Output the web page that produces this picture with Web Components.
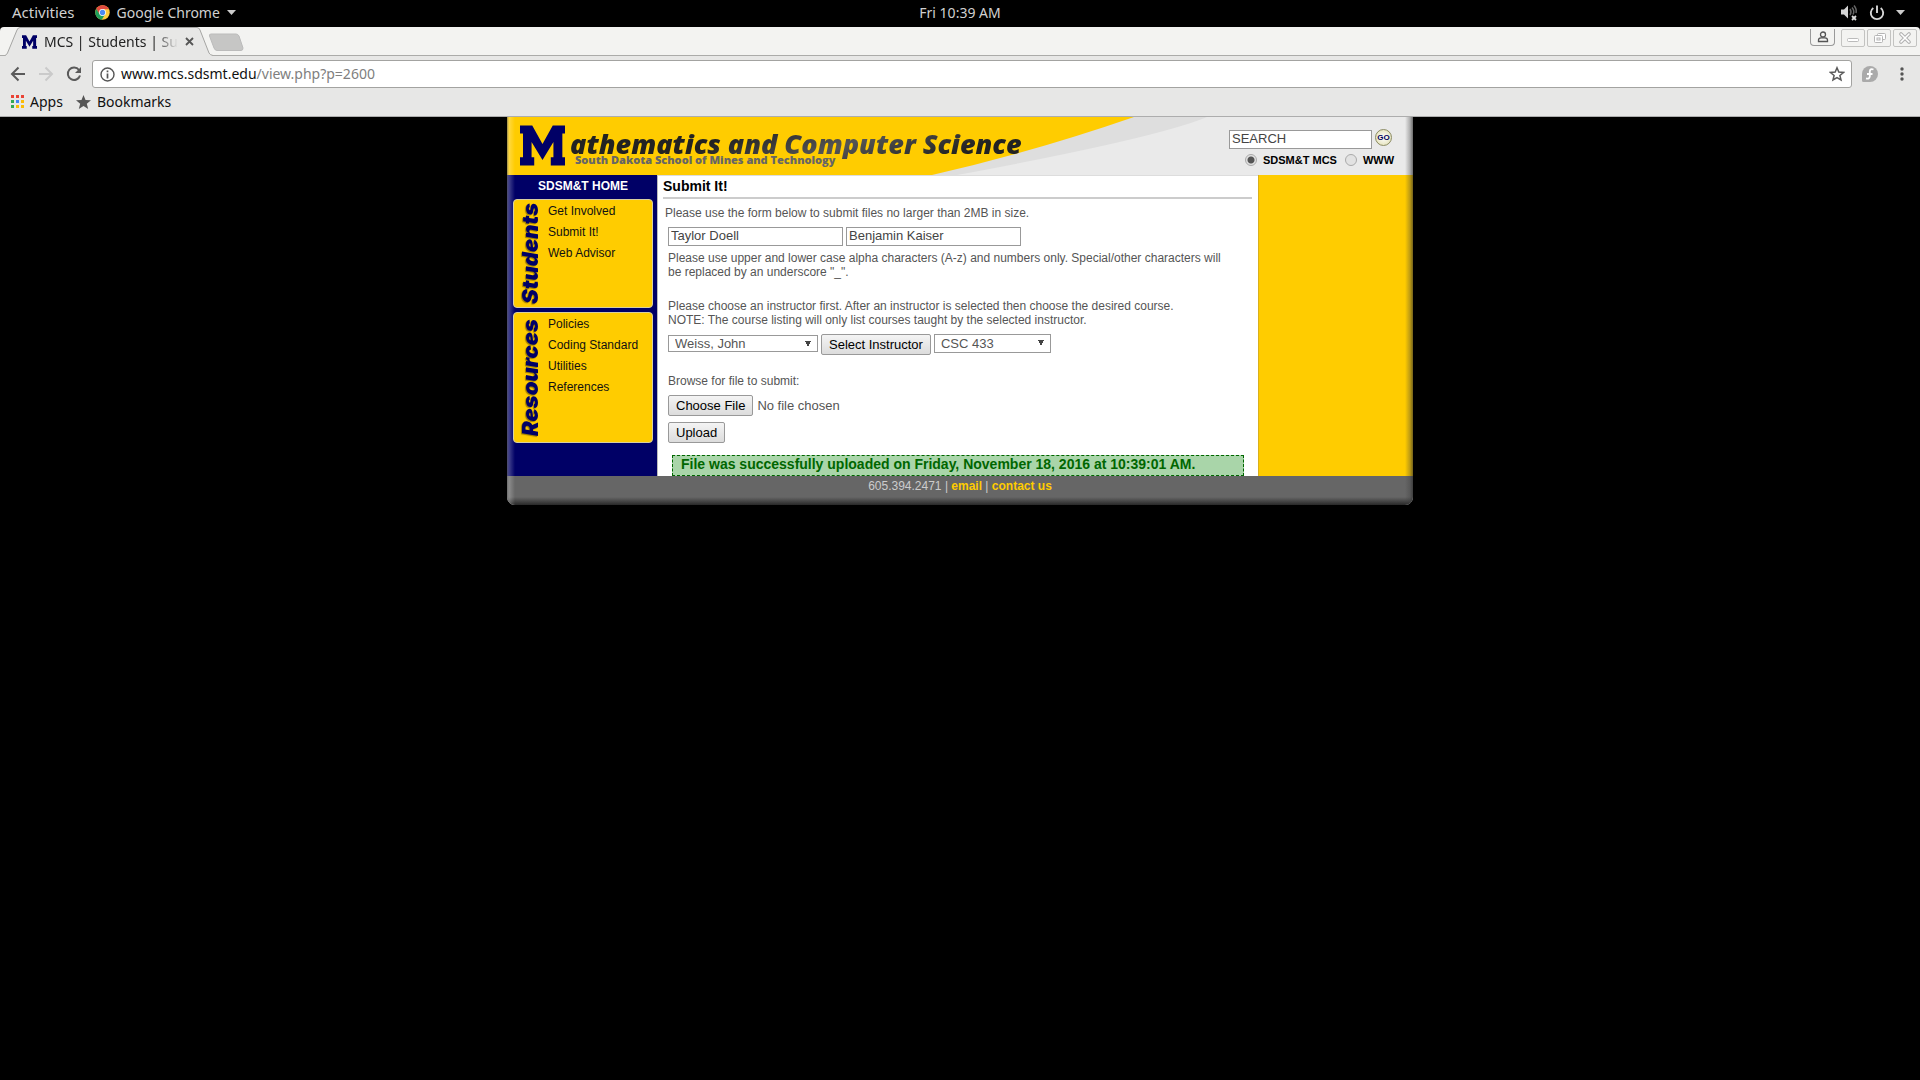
<!DOCTYPE html>
<html lang="en">
<head>
<meta charset="utf-8">
<title>MCS | Students | Submit It!</title>
<style>
  body { margin: 0; min-height: 100vh; background: #000; font-family: "Liberation Sans", sans-serif; }
</style>
</head>
<body>
<desktop-bar></desktop-bar>
<browser-tabs></browser-tabs>
<browser-toolbar></browser-toolbar>
<bookmarks-bar></bookmarks-bar>
<site-page>
  <site-header slot="header"></site-header>
  <side-column slot="nav">
    <side-menu label="Students" size="short">
      <a href="#involved">Get Involved</a>
      <a href="#submit">Submit It!</a>
      <a href="#advisor">Web Advisor</a>
    </side-menu>
    <side-menu label="Resources" size="tall">
      <a href="#policies">Policies</a>
      <a href="#coding">Coding Standard</a>
      <a href="#utilities">Utilities</a>
      <a href="#references">References</a>
    </side-menu>
  </side-column>
  <submit-form></submit-form>
  <site-footer slot="footer"></site-footer>
</site-page>

<script>
const define = (name, html) => customElements.define(name, class extends HTMLElement {
  constructor() {
    super();
    const t = document.createElement('template');
    t.innerHTML = typeof html === 'function' ? html(this) : html;
    this.attachShadow({ mode: 'open' }).append(t.content.cloneNode(true));
  }
});

define('desktop-bar', `
<style>
  :host { display: grid; grid-template-columns: 1fr auto 1fr; align-items: center; height: 27px; padding: 0 12px; background: #000; color: #d0d0d0; font: 14px/25px "Noto Sans", sans-serif; }
  button { font: inherit; color: inherit; background: none; border: 0; padding: 0; display: flex; align-items: center; }
  div { display: flex; align-items: center; height: 25px; align-self: start; }
  .left { gap: 20px; }
  .left > button:first-child { font-size: 15px; }
  .app { gap: 7px; }
  .right { justify-content: flex-end; gap: 11px; padding-right: 3px; }
  svg { display: block; }
</style>
<div class="left">
  <button>Activities</button>
  <button class="app">
    <svg width="15" height="15" viewBox="0 0 30 30"><circle cx="15" cy="15" r="14.500" fill="#ffcd40"/><path d="M2.500 8A14.500 14.500 0 0 1 28 8.500H15L9 18Z" fill="#e04a3f"/><path d="M2.500 7.700A14.500 14.500 0 0 0 13.500 29.400L20 19 9 18Z" fill="#1e9f5b"/><circle cx="15" cy="15" r="6.800" fill="#fff"/><circle cx="15" cy="15" r="5.300" fill="#4c8bf5"/></svg>
    <span>Google Chrome</span>
    <svg width="9" height="5" viewBox="0 0 9 5"><path d="M0 0H9L4.500 5Z" fill="#ccc"/></svg>
  </button>
</div>
<div>Fri 10:39 AM</div>
<div class="right">
  <svg width="18" height="17" viewBox="0 0 18 17"><path d="M1 5.500H4L8 1.500V14.500L4 10.500H1Z" fill="#d5d5d5"/><path d="M10 5Q12 8 10 11M12 3.500Q15 7 13 10.500M14 1.500Q17 5 16 9" fill="none" stroke="#666" stroke-width="1.500"/><path d="M12 12 16 16M16 12 12 16" stroke="#ddd" stroke-width="1.800"/></svg>
  <svg width="16" height="16" viewBox="0 0 16 16" fill="none" stroke="#d5d5d5" stroke-width="1.900"><path d="M4.300 3A6.200 6.200 0 1 0 11.700 3M8 .5V8"/></svg>
  <svg width="9" height="5" viewBox="0 0 9 5"><path d="M0 0H9L4.500 5Z" fill="#ccc"/></svg>
</div>`);

define('browser-tabs', `
<style>
  :host { display: flex; align-items: flex-start; height: 29px; background: linear-gradient(#ababa9, #ababa9) bottom / 100% 1px no-repeat #f3f3f1; border-radius: 4px 4px 0 0; color: #222; font: 14px "Noto Sans", sans-serif; padding: 0 3px 0 5px; box-sizing: border-box; }
  .tab { position: relative; width: 208px; height: 29px; display: flex; align-items: center; gap: 7px; padding: 0 18px 0 17px; box-sizing: border-box; }
  .tab > svg.shape { position: absolute; inset: 0; }
  .tab > * { position: relative; }
  .title { width: 134px; overflow: hidden; white-space: nowrap; line-height: 29px; -webkit-mask: linear-gradient(90deg, #000 110px, transparent 134px); mask: linear-gradient(90deg, #000 110px, transparent 134px); }
  button { border: 0; background: none; padding: 0; display: flex; color: inherit; }
  .new { padding-top: 6px; margin-left: -5px; }
  .spacer { flex: 1; }
  .win { display: flex; gap: 2px; }
  .win button { width: 24px; height: 18px; box-sizing: border-box; border: 1px solid #c3c3c1; border-radius: 2px; justify-content: center; align-items: center; margin-top: 2px; }
  .win button:first-child { border-color: #999; border-top: 0; border-radius: 0 0 4px 4px; width: 25px; height: 17px; margin-right: 4px; }
  svg { display: block; flex: none; }
</style>
<div class="tab">
  <svg class="shape" width="208" height="29" viewBox="0 0 208 29"><path d="M0 29V28.500Q1.500 28 2.500 26L12 3Q13 .5 15 .5H192Q194 .5 195 3L204 26Q205 28 208 28.500V29Z" fill="#e7e7e6"/><path d="M0 28.500Q1.500 28 2.500 26L12 3Q13 .5 15 .5H192Q194 .5 195 3L204 26Q205 28 208 28.500" fill="none" stroke="#a5a5a3"/></svg>
  <svg width="15" height="14" viewBox="0 0 136 121"><path d="M0 0H37L68 56 99 0H136V24H128V96H136V121H93V96H101V50L68 104 35 50V96H43V121H0V96H9V24H0Z" fill="#000066"/></svg>
  <span class="title">MCS | Students | Submit It!</span>
  <button aria-label="Close tab"><svg width="9" height="9" viewBox="0 0 9 9"><path d="M1 1 8 8M8 1 1 8" stroke="#555" stroke-width="1.800"/></svg></button>
</div>
<button class="new" aria-label="New tab"><svg width="36" height="19" viewBox="0 0 36 19"><path d="M3 1H28Q30 1 31 3L35 15Q35 17.500 33 17.500H9Q7 17.500 6 15L1.500 3Q1 1 3 1Z" fill="#c6c6c5" stroke="#bbb"/></svg></button>
<span class="spacer"></span>
<div class="win">
  <button aria-label="User"><svg width="12" height="12" viewBox="0 0 12 12" fill="none" stroke="#555" stroke-width="1.300"><circle cx="6" cy="3.500" r="2.500"/><path d="M1.500 10.500V9Q1.500 7 4 6.800H8Q10.500 7 10.500 9V10.500Z"/></svg></button>
  <button aria-label="Minimize"><svg width="12" height="12" viewBox="0 0 12 12"><rect x=".5" y="6.500" width="11" height="3" rx="1" fill="#fff" stroke="#bbb"/></svg></button>
  <button aria-label="Restore"><svg width="13" height="12" viewBox="0 0 13 12" fill="#fff" stroke="#b5b5b5"><rect x="4.500" y="1.500" width="8" height="6" rx="1"/><rect x="1.500" y="3.500" width="8" height="7" rx="1"/><rect x="4" y="6" width="3" height="2"/></svg></button>
  <button aria-label="Close"><svg width="12" height="12" viewBox="0 0 12 12"><path d="M2 2 10 10M10 2 2 10" stroke="#b0b0b0" stroke-width="3.600" stroke-linecap="round"/><path d="M2 2 10 10M10 2 2 10" stroke="#fff" stroke-width="1.600" stroke-linecap="round"/></svg></button>
</div>`);

define('browser-toolbar', `
<style>
  :host { display: flex; align-items: center; height: 36px; padding: 0 13px 0 10px; background: #e7e7e6; font: 14px "Noto Sans", sans-serif; }
  button { border: 0; background: none; padding: 0; display: flex; }
  svg { display: block; }
  .nav { display: flex; gap: 12px; margin-right: 10px; }
  .box { flex: 1; display: flex; align-items: center; gap: 6px; height: 28px; box-sizing: border-box; border: 1px solid #a3a3a1; border-radius: 3px; background: #fff; padding: 0 6px 0 7px; }
  .url { flex: 1; color: #808080; line-height: 26px; }
  .url b { font-weight: 400; color: #111; }
  .ext { display: flex; align-items: center; gap: 22px; margin-left: 10px; padding-right: 3px; }
</style>
<div class="nav">
  <button aria-label="Back"><svg width="16" height="16" viewBox="0 0 16 16" fill="none" stroke="#5a5a5a" stroke-width="2"><path d="M15 8H2.500M8.500 1.500 2 8 8.500 14.500"/></svg></button>
  <button aria-label="Forward"><svg width="16" height="16" viewBox="0 0 16 16" fill="none" stroke="#cacaca" stroke-width="2"><path d="M1 8H13.500M7.500 1.500 14 8 7.500 14.500"/></svg></button>
  <button aria-label="Reload"><svg width="16" height="16" viewBox="0 0 16 16"><path d="M13 4A6.200 6.200 0 1 0 14 9.500" fill="none" stroke="#5a5a5a" stroke-width="2"/><path d="M15 1V7H9Z" fill="#5a5a5a"/></svg></button>
</div>
<div class="box">
  <svg width="15" height="15" viewBox="0 0 15 15" fill="none" stroke="#555"><circle cx="7.500" cy="7.500" r="6.500" stroke-width="1.400"/><path d="M7.500 6.500V11.500M7.500 3.500V5.200" stroke-width="1.700"/></svg>
  <span class="url"><b>www.mcs.sdsmt.edu</b>/view.php?p=2600</span>
  <button aria-label="Bookmark this page"><svg width="16" height="16" viewBox="0 0 16 16"><path d="M8 1.800 9.800 6.100 14.500 6.500 10.900 9.500 12 14 8 11.600 4 14 5.100 9.500 1.500 6.500 6.200 6.100Z" fill="none" stroke="#5a5a5a" stroke-width="1.500"/></svg></button>
</div>
<div class="ext">
  <button aria-label="Fedora"><svg width="16" height="16" viewBox="0 0 16 16"><path d="M8 0A8 8 0 1 1 8 16H1.500Q0 16 0 14.500V8A8 8 0 0 1 8 0Z" fill="#aaa"/><path d="M11.500 3.500Q8 2.200 7.800 5.500V10.500Q7.500 13.300 4 12.300M5 8H10.500" fill="none" stroke="#fff" stroke-width="1.800"/></svg></button>
  <button aria-label="Menu"><svg width="4" height="14" viewBox="0 0 4 14" fill="#555"><circle cx="2" cy="2" r="1.700"/><circle cx="2" cy="7" r="1.700"/><circle cx="2" cy="12" r="1.700"/></svg></button>
</div>`);

define('bookmarks-bar', `
<style>
  :host { display: flex; align-items: flex-start; gap: 13px; height: 25px; box-sizing: border-box; padding: 0 11px; background: #e7e7e6; border-bottom: 1px solid #adadad; font: 14px "Noto Sans", sans-serif; }
  a { display: flex; align-items: center; gap: 6px; color: #111; text-decoration: none; line-height: 19px; }
  svg { display: block; }
</style>
<a href="#apps"><svg width="13" height="13" viewBox="0 0 13 13"><path d="M0 0H3V3H0ZM5 0H8V3H5ZM10 0H13V3H10Z" fill="#ea4335"/><path d="M0 5H3V8H0ZM0 10H3V13H0Z" fill="#34a853"/><path d="M5 5H8V8H5Z" fill="#4285f4"/><path d="M10 5H13V8H10ZM5 10H8V13H5ZM10 10H13V13H10Z" fill="#fbbc05"/></svg>Apps</a>
<a href="#bookmarks"><svg width="15" height="14" viewBox="0 0 15 14"><path d="M7.500 0 9.500 5 15 5.300 10.800 8.700 12.200 14 7.500 11 2.800 14 4.200 8.700 0 5.300 5.500 5Z" fill="#555"/></svg>Bookmarks</a>`);

define('site-page', `
<style>
  :host { display: block; position: relative; width: min(906px, 100%); margin: 0 auto; background: #fff; border-radius: 0 0 8px 8px; overflow: hidden; }
  .cols { display: grid; grid-template-columns: 150px 1fr 155px; }
  .main { border-left: 1px solid #bbb; border-top: 1px solid #ddd; padding: 0 6px 0 5px; }
  .right { background: #fc0; border-left: 1px solid #d9b01c; }
  .edge { position: absolute; inset: 0; pointer-events: none; background:
    linear-gradient(90deg, rgba(110,110,110,.7), rgba(255,255,255,.25) 2px, rgba(255,255,255,0) 8px) left / 8px 100% no-repeat,
    linear-gradient(270deg, rgba(40,40,40,.65), rgba(60,60,60,.35) 3px, rgba(60,60,60,0) 8px) right / 8px 100% no-repeat,
    linear-gradient(0deg, rgba(20,20,20,.75), rgba(60,60,60,0) 8px) bottom / 100% 8px no-repeat; }
</style>
<slot name="header"></slot>
<div class="cols">
  <slot name="nav"></slot>
  <div class="main"><slot></slot></div>
  <div class="right"></div>
</div>
<slot name="footer"></slot>
<div class="edge"></div>`);

define('site-header', `
<style>
  :host { display: flex; justify-content: space-between; position: relative; height: 58px; background: #eaeaea; }
  .swoosh { position: absolute; left: 0; top: 0; }
  .brand { position: relative; display: flex; padding: 8px 0 0 13px; gap: 5px; }
  .words { display: flex; flex-direction: column; align-items: flex-start; white-space: nowrap; }
  h1 { margin: 0; padding: 4px 4px 0 0; font: italic 800 27px/30px "Open Sans", sans-serif; color: transparent; background: linear-gradient(160deg, #222 35%, #555 60%, #222 85%); -webkit-background-clip: text; background-clip: text; }
  p { margin: -6px 0 0 5px; font: 800 11px/13px "Open Sans", sans-serif; color: #666; }
  form { position: relative; width: 180px; padding: 12px 0 0; margin: 0 4px 0 0; }
  .row { display: flex; gap: 3px; align-items: flex-start; }
  .row input { width: 143px; height: 19px; box-sizing: border-box; border: 1px solid #999; padding: 0 2px 2px; font: 13px "Liberation Sans", sans-serif; color: #444; margin-top: 1px; background: #fff; }
  button { width: 17px; height: 17px; padding: 0; border: 1px solid #8b8b62; border-radius: 50%; background: radial-gradient(#fff, #e8e6c4 70%, #bdb98c); font: 700 8px/15px "Liberation Sans", sans-serif; color: #00005c; }
  .opts { display: flex; align-items: center; padding-left: 16px; margin-top: 2px; color: #000; font: 700 11px/18px "Liberation Sans", sans-serif; }
  .opts input { appearance: none; width: 12px; height: 12px; margin: 0; border: 1px solid #aaa; border-radius: 50%; background: #e2e2e2; }
  .opts input:checked { background: radial-gradient(circle, #555 0 3px, #e2e2e2 4px); }
  .opts label { margin: 0 8px 0 6px; }
</style>
<svg class="swoosh" width="906" height="58" viewBox="0 0 906 58"><path d="M620 0H700Q650 21 450 58H410Z" fill="#dedede"/><path d="M0 0H627Q526 35 425 58H0Z" fill="#fc0"/></svg>
<div class="brand">
  <svg width="45" height="41" viewBox="0 0 136 121"><path d="M0 0H37L68 56 99 0H136V24H128V96H136V121H93V96H101V50L68 104 35 50V96H43V121H0V96H9V24H0Z" fill="#000066"/></svg>
  <div class="words"><h1>athematics and Computer Science</h1><p>South Dakota School of Mines and Technology</p></div>
</div>
<form>
  <div class="row"><input type="text" value="SEARCH" aria-label="Search"><button type="button">GO</button></div>
  <div class="opts"><input type="radio" name="where" id="mcs" checked><label for="mcs">SDSM&amp;T MCS</label><input type="radio" name="where" id="www"><label for="www">WWW</label></div>
</form>`);

define('side-column', `
<style>
  :host { display: flex; flex-direction: column; background: #000066; padding: 0 4px 0 6px; }
  a { color: #fff; text-decoration: none; text-align: center; font: 700 12px/22px "Liberation Sans", sans-serif; margin-bottom: 2px; }
</style>
<a href="#home">SDSM&amp;T HOME</a>
<slot></slot>`);

define('side-menu', el => `
<style>
  :host { display: flex; box-sizing: border-box; border-radius: 4px; background: #fc0; border: 1px solid #d8cfa0; min-height: 109px; margin-bottom: 4px; }
  :host([size="tall"]) { min-height: 131px; }
  .label { writing-mode: vertical-rl; transform: rotate(180deg); width: 34px; text-align: center; font: italic 900 22px/32px "Inter", sans-serif; color: #000066; text-shadow: -1px -1px 1px rgba(90,70,0,.6); }
  .links { display: flex; flex-direction: column; padding-top: 1px; }
  ::slotted(a) { color: #111; text-decoration: none; font: 12px/21px "Liberation Sans", sans-serif; white-space: nowrap; }
</style>
<div class="label">${el.getAttribute('label')}</div>
<div class="links"><slot></slot></div>`);

define('submit-form', `
<style>
  :host { display: block; font: 12px/14px "Liberation Sans", sans-serif; color: #555; }
  h2 { margin: 0; font-size: 14px; line-height: 21px; color: #000; border-bottom: 2px solid #ccc; }
  p { margin: 0; }
  .intro { margin: 7px 0 7px 2px; }
  form { padding: 0 5px; }
  .row { display: flex; align-items: flex-start; gap: 3px; }
  input[type=text] { width: 175px; height: 19px; box-sizing: border-box; border: 1px solid #999; padding: 0 2px 2px; font: 13px "Liberation Sans", sans-serif; color: #444; }
  .note { margin: 5px 0 20px; padding-right: 20px; }
  .row.pick { margin: 7px 0 19px; height: 21px; }
  select { appearance: none; box-sizing: border-box; width: 117px; height: 19px; border: 1px solid #999; border-radius: 0; padding: 0 6px; color: #555; font: 13px "Liberation Sans", sans-serif;
    background: conic-gradient(from -27deg at 50% 100%, #444 54deg, transparent 0) right 6px top 5px / 6px 6px no-repeat #fff; }
  #instructor { width: 150px; height: 17px; margin-top: 1px; }
  button, ::file-selector-button { height: 21px; box-sizing: border-box; border: 1px solid #999; border-radius: 2px; background: linear-gradient(#f4f4f4, #dcdcdc); color: #000; font: 13px "Liberation Sans", sans-serif; padding: 0 7px 1px; margin: 0; }
  ::file-selector-button { margin-right: 4px; }
  input[type=file] { display: block; width: 300px; height: 21px; margin: 7px 0 6px; font: 13px "Liberation Sans", sans-serif; color: #555; }
  .ok { margin: 12px 3px 0 4px; height: 21px; box-sizing: border-box; padding: 0 8px; border: 1px dashed #060; background: #a9d5a9; color: #060; font-weight: 700; font-size: 14px; line-height: 17px; }
</style>
<h2>Submit It!</h2>
<p class="intro">Please use the form below to submit files no larger than 2MB in size.</p>
<form>
  <div class="row"><input type="text" value="Taylor Doell" aria-label="First partner"><input type="text" value="Benjamin Kaiser" aria-label="Second partner"></div>
  <p class="note">Please use upper and lower case alpha characters (A-z) and numbers only. Special/other characters will be replaced by an underscore "_".</p>
  <p>Please choose an instructor first. After an instructor is selected then choose the desired course.<br>NOTE: The course listing will only list courses taught by the selected instructor.</p>
  <div class="row pick">
    <select id="instructor" aria-label="Instructor"><option>Weiss, John</option></select>
    <button type="button">Select Instructor</button>
    <select aria-label="Course"><option>CSC 433</option></select>
  </div>
  <label for="file">Browse for file to submit:</label>
  <input type="file" id="file">
  <button type="button">Upload</button>
  <div class="ok">File was successfully uploaded on Friday, November 18, 2016 at 10:39:01 AM.</div>
</form>`);

define('site-footer', `
<style>
  :host { display: block; height: 29px; background: #666; color: #ccc; text-align: center; font: 12px/20px "Liberation Sans", sans-serif; }
  a { color: #fc0; font-weight: 700; text-decoration: none; }
</style>
605.394.2471 | <a href="#email">email</a> | <a href="#contact">contact us</a>`);
</script>
</body>
</html>
